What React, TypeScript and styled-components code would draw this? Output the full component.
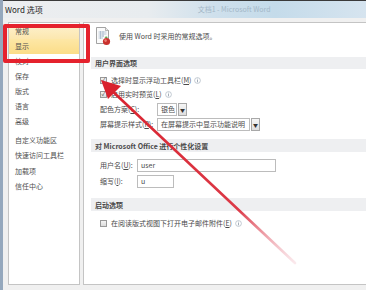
import React from "react";
import styled, { createGlobalStyle } from "styled-components";

const GlobalStyle = createGlobalStyle`
  html, body { margin: 0; padding: 0; background: #f0f0f0; }
  body { font-family: "Noto Sans CJK SC", "Noto Sans", "Liberation Sans", sans-serif; }
`;

const Window = styled.div`
  position: relative;
  width: 366px;
  height: 290px;
  box-sizing: border-box;
  overflow: hidden;
  display: flex;
  flex-direction: column;
  background: #f0f0f0;
  border-left: 3px solid #95a8bd;
`;

const TitleBar = styled.div`
  height: 18px;
  box-sizing: border-box;
  display: flex;
  align-items: center;
  padding-left: 2px;
  border-top: 1px solid #3a3a3a;
  background: linear-gradient(to right, #eceef0 0%, #e8ecef 40%, #cfe0ec 58%, #c4dbea 75%, #d6e4ef 100%);
`;

const TitleText = styled.span`
  font-size: 8px;
  color: #1e1e1e;
  line-height: 1;
`;

const GhostTitle = styled.span`
  margin-left: 155px;
  font-size: 7px;
  color: #a3b7c7;
  line-height: 1;
`;

const Body = styled.div`
  flex: 1;
  display: flex;
  gap: 3px;
  padding: 4px 0 5px 5px;
  min-height: 0;
`;

const Nav = styled.div`
  width: 72px;
  box-sizing: border-box;
  background: #fff;
  border: 1px solid #c4c4c4;
  padding-top: 1px;
  display: flex;
  flex-direction: column;
`;

const NavItem = styled.div<{ $state?: "hover" | "selected" }>`
  height: 15px;
  line-height: 15px;
  padding-left: 6px;
  font-size: 7px;
  color: #505050;
  background: ${(p) =>
    p.$state === "selected"
      ? "linear-gradient(#fde7a6, #fbdd88)"
      : p.$state === "hover"
      ? "linear-gradient(#fdf1cf, #fce7ae)"
      : "transparent"};
`;

const NavSpacer = styled.div<{ $h: number }>`
  height: ${(p) => p.$h}px;
`;

const Content = styled.div`
  flex: 1;
  background: #fff;
  border: 1px solid #c4c4c4;
  border-right: none;
  padding-left: 7px;
  display: flex;
  flex-direction: column;
`;

const IntroRow = styled.div`
  margin-top: 3px;
  height: 20px;
  display: flex;
  align-items: center;
  gap: 7px;
  padding-left: 4px;
  font-size: 7px;
  color: #4a4a4a;
`;

const SectionBar = styled.div<{ $top: number; $h?: number }>`
  margin-top: ${(p) => p.$top}px;
  height: ${(p) => p.$h ?? 13}px;
  display: flex;
  align-items: center;
  padding-left: 4px;
  background: #eeeff1;
  font-size: 7px;
  font-weight: 700;
  color: #4a4a4a;
`;

const Row = styled.div<{ $top: number }>`
  margin-top: ${(p) => p.$top}px;
  height: 14px;
  display: flex;
  align-items: center;
  padding-left: 9px;
  font-size: 7px;
  color: #4a4a4a;
`;

const CheckBox = styled.span`
  width: 7px;
  height: 7px;
  box-sizing: border-box;
  border: 1px solid #9a9a9a;
  background: linear-gradient(#f4f4f4, #dcdcdc);
  margin-right: 4px;
  display: flex;
  align-items: center;
  justify-content: center;
  color: #4a4a4a;
  font-size: 6px;
  line-height: 1;
`;

const Label = styled.span<{ $w: number }>`
  width: ${(p) => p.$w}px;
  flex-shrink: 0;
  white-space: nowrap;
`;

const Field = styled.span<{ $w: number }>`
  width: ${(p) => p.$w}px;
  height: 13px;
  box-sizing: border-box;
  border: 1px solid #bcbcbc;
  background: #fff;
  display: flex;
  align-items: center;
  padding-left: 3px;
  font-size: 7px;
  color: #4a4a4a;
  white-space: nowrap;
  overflow: hidden;
`;

const DropButton = styled.span`
  width: 9px;
  height: 13px;
  box-sizing: border-box;
  margin-left: 1px;
  border: 1px solid #a8a8a8;
  background: linear-gradient(#f6f6f6, #dedede);
  display: flex;
  align-items: center;
  justify-content: center;
  font-size: 5px;
  color: #333;
`;

const Info = styled.svg`
  margin-left: 3px;
  flex-shrink: 0;
`;

const Highlight = styled.div`
  position: absolute;
  left: 0;
  top: 24px;
  width: 87px;
  height: 39px;
  box-sizing: border-box;
  border: 4px solid #e5222d;
  border-radius: 2px;
  pointer-events: none;
`;

const ArrowLayer = styled.svg`
  position: absolute;
  left: 0;
  top: 0;
  pointer-events: none;
`;

const InfoIcon = () => (
  <Info width="7" height="7" viewBox="0 0 7 7">
    <circle cx="3.5" cy="3.5" r="2.9" fill="#fff" stroke="#a9b4c0" strokeWidth="0.7" />
    <rect x="3.1" y="3" width="0.8" height="2.3" fill="#8d9aa8" />
    <rect x="3.1" y="1.7" width="0.8" height="0.8" fill="#8d9aa8" />
  </Info>
);

const OptionsIcon = () => (
  <svg width="17" height="20" viewBox="0 0 17 20">
    <path d="M1.5 1.5h9l3 3v13h-12z" fill="#fbfbfb" stroke="#8c8c8c" strokeWidth="0.8" />
    <path d="M10.5 1.5v3h3" fill="#e8e8e8" stroke="#8c8c8c" strokeWidth="0.6" />
    <g stroke="#9fb3c8" strokeWidth="0.7">
      <line x1="3.5" y1="6" x2="11.5" y2="6" />
      <line x1="3.5" y1="8" x2="11.5" y2="8" />
      <line x1="3.5" y1="10" x2="9" y2="10" />
      <line x1="3.5" y1="12" x2="8" y2="12" />
      <line x1="5.5" y1="5" x2="5.5" y2="13" />
      <line x1="8" y1="5" x2="8" y2="11" />
    </g>
    <circle cx="11.5" cy="15.5" r="3.6" fill="#c9302c" />
    <circle cx="10.6" cy="14.6" r="1.3" fill="#e97c73" />
    <path d="M9.5 11.5c1-1.4 2.8-1.2 3.3 0-1 .5-2.2.6-3.3 0z" fill="#4f9a3c" />
  </svg>
);

const nav = [
  { t: "常规", s: "hover" as const },
  { t: "显示", s: "selected" as const },
  { t: "校对" },
  { t: "保存" },
  { t: "版式" },
  { t: "语言" },
  { t: "高级" },
];

export default function App() {
  return (
    <>
      <GlobalStyle />
      <Window>
        <TitleBar>
          <TitleText>Word 选项</TitleText>
          <GhostTitle>文档1 - Microsoft Word</GhostTitle>
        </TitleBar>
        <Body>
          <Nav>
            {nav.map((n) => (
              <NavItem key={n.t} $state={n.s}>
                {n.t}
              </NavItem>
            ))}
            <NavSpacer $h={4} />
            <NavItem>自定义功能区</NavItem>
            <NavItem>快速访问工具栏</NavItem>
            <NavSpacer $h={1} />
            <NavItem>加载项</NavItem>
            <NavItem>信任中心</NavItem>
          </Nav>
          <Content>
            <IntroRow>
              <OptionsIcon />
              <span>使用 Word 时采用的常规选项。</span>
            </IntroRow>
            <SectionBar $top={11} $h={12}>用户界面选项</SectionBar>
            <Row $top={4}>
              <CheckBox>✓</CheckBox>
              <span>选择时显示浮动工具栏(<u>M</u>)</span>
              <InfoIcon />
            </Row>
            <Row $top={0}>
              <CheckBox>✓</CheckBox>
              <span>启用实时预览(<u>L</u>)</span>
              <InfoIcon />
            </Row>
            <Row $top={1}>
              <Label $w={57}>配色方案(<u>C</u>):</Label>
              <Field $w={20}>银色</Field>
              <DropButton>▼</DropButton>
            </Row>
            <Row $top={1}>
              <Label $w={57}>屏幕提示样式(<u>R</u>):</Label>
              <Field $w={93}>在屏幕提示中显示功能说明</Field>
              <DropButton>▼</DropButton>
            </Row>
            <SectionBar $top={8}>对 Microsoft Office 进行个性化设置</SectionBar>
            <Row $top={6}>
              <Label $w={37}>用户名(<u>U</u>):</Label>
              <Field $w={139}>user</Field>
            </Row>
            <Row $top={2}>
              <Label $w={37}>缩写(<u>I</u>):</Label>
              <Field $w={37}>u</Field>
            </Row>
            <SectionBar $top={10}>启动选项</SectionBar>
            <Row $top={5}>
              <CheckBox />
              <span>在阅读版式视图下打开电子邮件附件(<u>E</u>)</span>
              <InfoIcon />
            </Row>
          </Content>
        </Body>
        <Highlight />
        <ArrowLayer width="366" height="290" viewBox="0 0 366 290">
          <defs>
            <linearGradient id="fade" gradientUnits="userSpaceOnUse" x1="105" y1="87" x2="292" y2="263">
              <stop offset="0" stopColor="#d9222e" />
              <stop offset="0.7" stopColor="#dc3a48" />
              <stop offset="1" stopColor="#f0b5c0" stopOpacity="0.3" />
            </linearGradient>
          </defs>
          <line x1="106" y1="88" x2="292" y2="263" stroke="url(#fade)" strokeWidth="2.6" strokeLinecap="round" />
          <polygon points="98,80 118,86 105,99" fill="#d9222e" />
        </ArrowLayer>
      </Window>
    </>
  );
}
